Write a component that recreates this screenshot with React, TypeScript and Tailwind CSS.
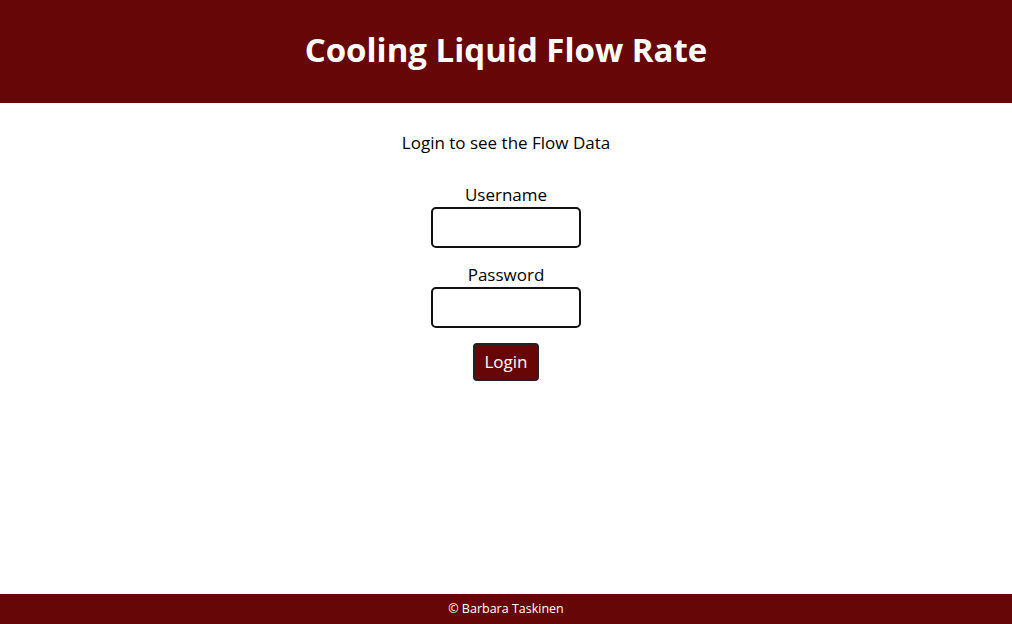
export default function App() {
  return (
    <div className="flex min-h-screen flex-col bg-white font-['Open_Sans',sans-serif] text-black">
      <header className="flex h-[103px] items-center justify-center bg-[#670606] pb-[4px]">
        <h1 className="text-[33px] font-bold text-white">Cooling Liquid Flow Rate</h1>
      </header>

      <main className="flex flex-1 flex-col items-center pt-[28px]">
        <p className="text-[17px] leading-[24px]">Login to see the Flow Data</p>

        <form className="mt-[28px] flex flex-col items-center" onSubmit={(e) => e.preventDefault()}>
          <label htmlFor="username" className="text-[17px] leading-[24px]">
            Username
          </label>
          <input
            id="username"
            type="text"
            className="h-[41px] w-[150px] rounded-[5px] border-2 border-[#111] px-2"
          />
          <label htmlFor="password" className="mt-[15px] text-[17px] leading-[24px]">
            Password
          </label>
          <input
            id="password"
            type="password"
            className="h-[41px] w-[150px] rounded-[5px] border-2 border-[#111] px-2"
          />
          <button
            type="submit"
            className="mt-[15px] h-[38px] w-[66px] rounded-[4px] border-2 border-[#222] bg-[#670606] text-[17px] text-white"
          >
            Login
          </button>
        </form>
      </main>

      <footer className="flex h-[30px] items-center justify-center bg-[#670606]">
        <p className="text-[12.5px] text-white">© Barbara Taskinen</p>
      </footer>
    </div>
  );
}
